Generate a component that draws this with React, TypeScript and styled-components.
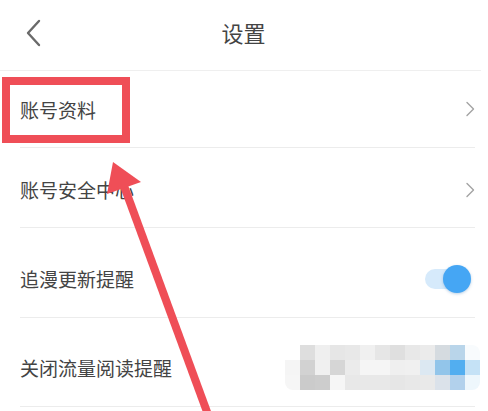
import React from "react";
import styled, { createGlobalStyle } from "styled-components";

const GlobalStyle = createGlobalStyle`
  html, body {
    margin: 0;
    padding: 0;
    background: #ffffff;
  }
  body {
    font-family: "Noto Sans CJK SC", "Noto Sans", sans-serif;
    color: #444444;
  }
  #root {
    width: 488px;
    height: 411px;
    overflow: hidden;
  }
`;

const Screen = styled.div`
  position: relative;
  width: 488px;
  height: 411px;
  background: #ffffff;
  overflow: hidden;
`;

const Header = styled.header`
  position: relative;
  height: 70px;
  border-bottom: 1px solid #efefef;
  margin-right: 7px;
  display: flex;
  align-items: center;
  justify-content: center;
`;

const BackButton = styled.button`
  position: absolute;
  left: 22px;
  top: 18px;
  width: 22px;
  height: 30px;
  padding: 0;
  border: none;
  background: transparent;
  display: flex;
  align-items: center;
  justify-content: center;
`;

const Title = styled.h1`
  margin: 0;
  margin-left: 6px;
  margin-top: -6px;
  font-size: 22px;
  font-weight: 400;
  color: #444444;
  line-height: 1;
`;

const List = styled.div`
  display: flex;
  flex-direction: column;
`;

const Row = styled.div<{ $h: number; $pt: number }>`
  box-sizing: border-box;
  height: ${(p) => p.$h}px;
  padding-top: ${(p) => p.$pt}px;
  margin: 0 13px 0 20px;
  border-bottom: 1px solid #ececec;
  display: flex;
  align-items: center;
  justify-content: space-between;
`;

const Label = styled.span`
  font-size: 19px;
  color: #444444;
  line-height: 1;
`;

const Toggle = styled.div`
  position: relative;
  width: 46px;
  height: 30px;
  margin-right: 4px;
  display: flex;
  align-items: center;
`;

const Track = styled.div`
  width: 36px;
  height: 20px;
  border-radius: 10px;
  background: #d6eafb;
`;

const Knob = styled.div`
  position: absolute;
  right: 0;
  top: 1px;
  width: 28px;
  height: 28px;
  border-radius: 50%;
  background: #45a6f4;
  box-shadow: 0 1px 3px rgba(60, 120, 180, 0.35);
`;

const Mosaic = styled.div`
  display: grid;
  grid-template-columns: repeat(13, 15px);
  grid-template-rows: repeat(3, 15px);
  margin-right: -5px;
  margin-top: 1px;
  border-radius: 8px;
  overflow: hidden;
`;

const Cell = styled.div<{ $c: string }>`
  background: ${(p) => p.$c};
`;

const Annotation = styled.div`
  position: absolute;
  left: 2px;
  top: 77px;
  width: 128px;
  height: 66px;
  box-sizing: border-box;
  border: 8px solid #ef4e57;
  pointer-events: none;
`;

const ArrowLayer = styled.svg`
  position: absolute;
  left: 0;
  top: 0;
  pointer-events: none;
`;

const mosaicRows: string[][] = [
  ["#ffffff", "#dedede", "#efefef", "#e6e6e6", "#e8e8e8", "#f0f0f0", "#e6e6e6", "#dfdfdf", "#e8e8e8", "#ebebeb", "#d5dbe0", "#b9d5ea", "#f8fbfd"],
  ["#f5f5f5", "#d2d2d2", "#f0f0f0", "#d6d6d6", "#ebebeb", "#f5f5f5", "#f5f5f5", "#efefef", "#f0f0f0", "#dce8f2", "#92c5ea", "#52aef0", "#c5e2f6"],
  ["#f6f6f6", "#cbcbcb", "#cdcdcd", "#f6f6f6", "#e8e8e8", "#e8e8e8", "#e8e8e8", "#e6e6e6", "#e8e8e8", "#e9e9e9", "#dbe2ea", "#b2d1ec", "#eef7fc"],
];

const ChevronRight = () => (
  <svg width="10" height="16" viewBox="0 0 10 16" fill="none">
    <path d="M2 1.5 L8.5 8 L2 14.5" stroke="#a3a3a3" strokeWidth="1.4" strokeLinecap="round" strokeLinejoin="round" />
  </svg>
);

const ChevronLeft = () => (
  <svg width="16" height="28" viewBox="0 0 16 28" fill="none">
    <path d="M14 2 L3 14 L14 26" stroke="#6a6a6a" strokeWidth="2.4" strokeLinecap="round" strokeLinejoin="round" />
  </svg>
);

export default function App() {
  return (
    <Screen>
      <GlobalStyle />
      <Header>
        <BackButton aria-label="返回">
          <ChevronLeft />
        </BackButton>
        <Title>设置</Title>
      </Header>
      <List>
        <Row $h={77} $pt={0}>
          <Label>账号资料</Label>
          <ChevronRight />
        </Row>
        <Row $h={80} $pt={4}>
          <Label>账号安全中心</Label>
          <ChevronRight />
        </Row>
        <Row $h={90} $pt={12}>
          <Label>追漫更新提醒</Label>
          <Toggle>
            <Track />
            <Knob />
          </Toggle>
        </Row>
        <Row $h={89} $pt={10}>
          <Label>关闭流量阅读提醒</Label>
          <Mosaic>
            {mosaicRows.flatMap((r, i) => r.map((c, j) => <Cell key={`${i}-${j}`} $c={c} />))}
          </Mosaic>
        </Row>
      </List>
      <Annotation />
      <ArrowLayer width="488" height="411" viewBox="0 0 488 411">
        <line x1="124" y1="186" x2="210" y2="420" stroke="#ef4e57" strokeWidth="8" />
        <polygon points="113,162 107,194 141,182" fill="#ef4e57" />
      </ArrowLayer>
    </Screen>
  );
}
